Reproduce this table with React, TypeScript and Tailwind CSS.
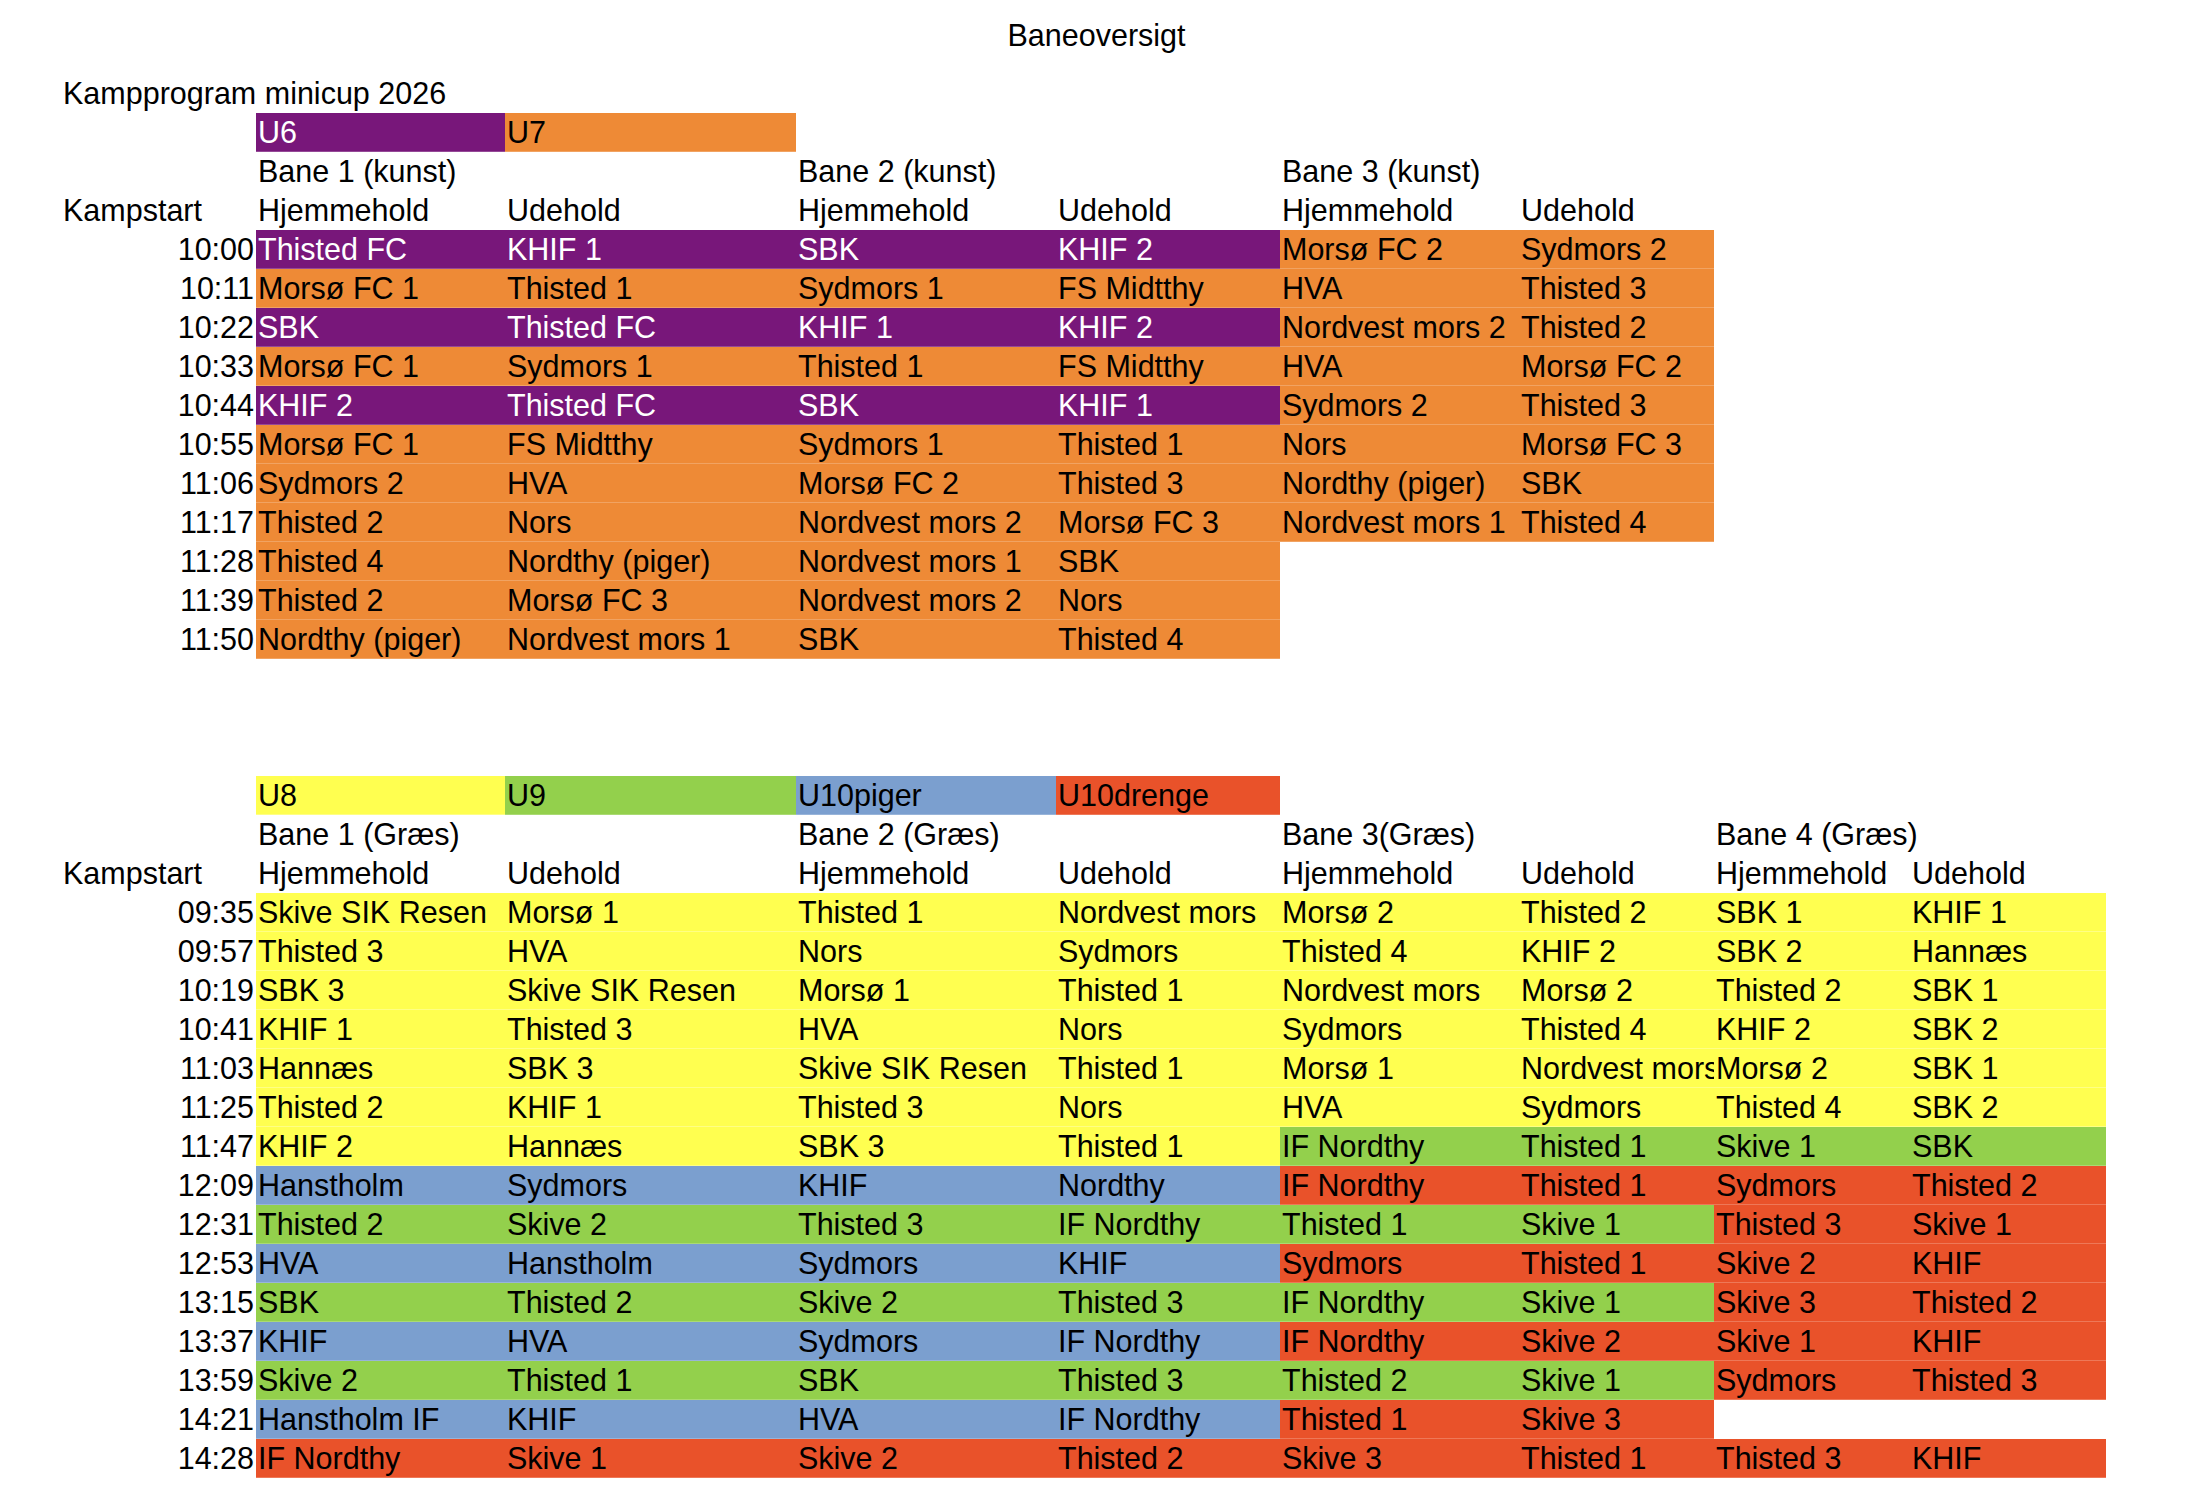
import React from "react";

type C = "p" | "o" | "y" | "g" | "b" | "r" | "";

const bg: Record<string, string> = {
  p: "bg-[#78177a] text-white shadow-[inset_0_-1px_0_rgba(255,255,255,0.22)]",
  o: "bg-[#ee8a36] text-black shadow-[inset_0_-1px_0_rgba(255,255,255,0.22)]",
  y: "bg-[#ffff50] text-black shadow-[inset_0_-1px_0_rgba(255,255,255,0.3)]",
  g: "bg-[#93d04c] text-black shadow-[inset_0_-1px_0_rgba(255,255,255,0.22)]",
  b: "bg-[#7b9fcf] text-black shadow-[inset_0_-1px_0_rgba(255,255,255,0.22)]",
  r: "bg-[#e9522a] text-black shadow-[inset_0_-1px_0_rgba(255,255,255,0.22)]",
  "": "text-black",
};

type Row = { t: string; cells: [string, C][] };

function mk(t: string, spec: string, names: string[]): Row {
  const cells: [string, C][] = [];
  for (let i = 0; i < 8; i++) {
    const ch = (spec[i] || "-") as string;
    cells.push([names[i] ?? "", ch === "-" ? "" : (ch as C)]);
  }
  return { t, cells };
}

const table1: Row[] = [
  mk("10:00", "ppppoo--", ["Thisted FC", "KHIF 1", "SBK", "KHIF 2", "Morsø FC 2", "Sydmors 2"]),
  mk("10:11", "oooooo--", ["Morsø FC 1", "Thisted 1", "Sydmors 1", "FS Midtthy", "HVA", "Thisted 3"]),
  mk("10:22", "ppppoo--", ["SBK", "Thisted FC", "KHIF 1", "KHIF 2", "Nordvest mors 2", "Thisted 2"]),
  mk("10:33", "oooooo--", ["Morsø FC 1", "Sydmors 1", "Thisted 1", "FS Midtthy", "HVA", "Morsø FC 2"]),
  mk("10:44", "ppppoo--", ["KHIF 2", "Thisted FC", "SBK", "KHIF 1", "Sydmors 2", "Thisted 3"]),
  mk("10:55", "oooooo--", ["Morsø FC 1", "FS Midtthy", "Sydmors 1", "Thisted 1", "Nors", "Morsø FC 3"]),
  mk("11:06", "oooooo--", ["Sydmors 2", "HVA", "Morsø FC 2", "Thisted 3", "Nordthy (piger)", "SBK"]),
  mk("11:17", "oooooo--", ["Thisted 2", "Nors", "Nordvest mors 2", "Morsø FC 3", "Nordvest mors 1", "Thisted 4"]),
  mk("11:28", "oooo----", ["Thisted 4", "Nordthy (piger)", "Nordvest mors 1", "SBK"]),
  mk("11:39", "oooo----", ["Thisted 2", "Morsø FC 3", "Nordvest mors 2", "Nors"]),
  mk("11:50", "oooo----", ["Nordthy (piger)", "Nordvest mors 1", "SBK", "Thisted 4"]),
];

const table2: Row[] = [
  mk("09:35", "yyyyyyyy", ["Skive SIK Resen", "Morsø 1", "Thisted 1", "Nordvest mors", "Morsø 2", "Thisted 2", "SBK 1", "KHIF 1"]),
  mk("09:57", "yyyyyyyy", ["Thisted 3", "HVA", "Nors", "Sydmors", "Thisted 4", "KHIF 2", "SBK 2", "Hannæs"]),
  mk("10:19", "yyyyyyyy", ["SBK 3", "Skive SIK Resen", "Morsø 1", "Thisted 1", "Nordvest mors", "Morsø 2", "Thisted 2", "SBK 1"]),
  mk("10:41", "yyyyyyyy", ["KHIF 1", "Thisted 3", "HVA", "Nors", "Sydmors", "Thisted 4", "KHIF 2", "SBK 2"]),
  mk("11:03", "yyyyyyyy", ["Hannæs", "SBK 3", "Skive SIK Resen", "Thisted 1", "Morsø 1", "Nordvest mors", "Morsø 2", "SBK 1"]),
  mk("11:25", "yyyyyyyy", ["Thisted 2", "KHIF 1", "Thisted 3", "Nors", "HVA", "Sydmors", "Thisted 4", "SBK 2"]),
  mk("11:47", "yyyygggg", ["KHIF 2", "Hannæs", "SBK 3", "Thisted 1", "IF Nordthy", "Thisted 1", "Skive 1", "SBK"]),
  mk("12:09", "bbbbrrrr", ["Hanstholm", "Sydmors", "KHIF", "Nordthy", "IF Nordthy", "Thisted 1", "Sydmors", "Thisted 2"]),
  mk("12:31", "ggggggrr", ["Thisted 2", "Skive 2", "Thisted 3", "IF Nordthy", "Thisted 1", "Skive 1", "Thisted 3", "Skive 1"]),
  mk("12:53", "bbbbrrrr", ["HVA", "Hanstholm", "Sydmors", "KHIF", "Sydmors", "Thisted 1", "Skive 2", "KHIF"]),
  mk("13:15", "ggggggrr", ["SBK", "Thisted 2", "Skive 2", "Thisted 3", "IF Nordthy", "Skive 1", "Skive 3", "Thisted 2"]),
  mk("13:37", "bbbbrrrr", ["KHIF", "HVA", "Sydmors", "IF Nordthy", "IF Nordthy", "Skive 2", "Skive 1", "KHIF"]),
  mk("13:59", "ggggggrr", ["Skive 2", "Thisted 1", "SBK", "Thisted 3", "Thisted 2", "Skive 1", "Sydmors", "Thisted 3"]),
  mk("14:21", "bbbbrr--", ["Hanstholm IF", "KHIF", "HVA", "IF Nordthy", "Thisted 1", "Skive 3"]),
  mk("14:28", "rrrrrrrr", ["IF Nordthy", "Skive 1", "Skive 2", "Thisted 2", "Skive 3", "Thisted 1", "Thisted 3", "KHIF"]),
];

const GRID =
  "grid grid-cols-[195px_249px_291px_260px_224px_239px_195px_196px_196px] auto-rows-[39px]";

function Cell({ text, c, clip = true }: { text: string; c: C; clip?: boolean }) {
  return (
    <div
      className={`pl-[2px] whitespace-nowrap ${clip ? "overflow-hidden" : "overflow-visible"} ${bg[c]}`}
    >
      {text}
    </div>
  );
}

function HeaderRow({ items }: { items: [string, C][] }) {
  return (
    <>
      <div />
      {items.map(([t, c], i) => (
        <Cell key={i} text={t} c={c} clip={false} />
      ))}
    </>
  );
}

function Table({
  tags,
  banes,
  cols,
  rows,
}: {
  tags: [string, C][];
  banes: string[];
  cols: number;
  rows: Row[];
}) {
  const tagItems: [string, C][] = [];
  for (let i = 0; i < 8; i++) tagItems.push(tags[i] ?? ["", ""]);
  const baneItems: [string, C][] = [];
  for (let i = 0; i < 8; i++) baneItems.push([banes[i] ?? "", ""]);
  const heads: [string, C][] = [];
  for (let i = 0; i < 8; i++)
    heads.push([i < cols ? (i % 2 === 0 ? "Hjemmehold" : "Udehold") : "", ""]);
  return (
    <div className={GRID}>
      <HeaderRow items={tagItems} />
      <HeaderRow items={baneItems} />
      <div className="pl-[2px] whitespace-nowrap">Kampstart</div>
      {heads.map(([t], i) => (
        <Cell key={i} text={t} c="" clip={false} />
      ))}
      {rows.map((r) => (
        <React.Fragment key={r.t}>
          <div className="text-right pr-[2px]">{r.t}</div>
          {r.cells.map(([t, c], i) => (
            <Cell key={i} text={t} c={c} />
          ))}
        </React.Fragment>
      ))}
    </div>
  );
}

export default function App() {
  return (
    <div className="min-h-[1510px] w-[2193px] bg-white text-black font-['Liberation_Sans',Arial,sans-serif] text-[30.5px] leading-[39px]">
      <div className="h-[74px] pt-[16px] text-center leading-[39px]">Baneoversigt</div>
      <div className="pl-[61px]">
        <div className="h-[39px] pl-[2px] whitespace-nowrap">Kampprogram minicup 2026</div>
        <Table
          tags={[
            ["U6", "p"],
            ["U7", "o"],
          ]}
          banes={["Bane 1 (kunst)", "", "Bane 2 (kunst)", "", "Bane 3 (kunst)"]}
          cols={6}
          rows={table1}
        />
        <div className="h-[117px]" />
        <Table
          tags={[
            ["U8", "y"],
            ["U9", "g"],
            ["U10piger", "b"],
            ["U10drenge", "r"],
          ]}
          banes={["Bane 1 (Græs)", "", "Bane 2 (Græs)", "", "Bane 3(Græs)", "", "Bane 4 (Græs)"]}
          cols={8}
          rows={table2}
        />
      </div>
    </div>
  );
}
